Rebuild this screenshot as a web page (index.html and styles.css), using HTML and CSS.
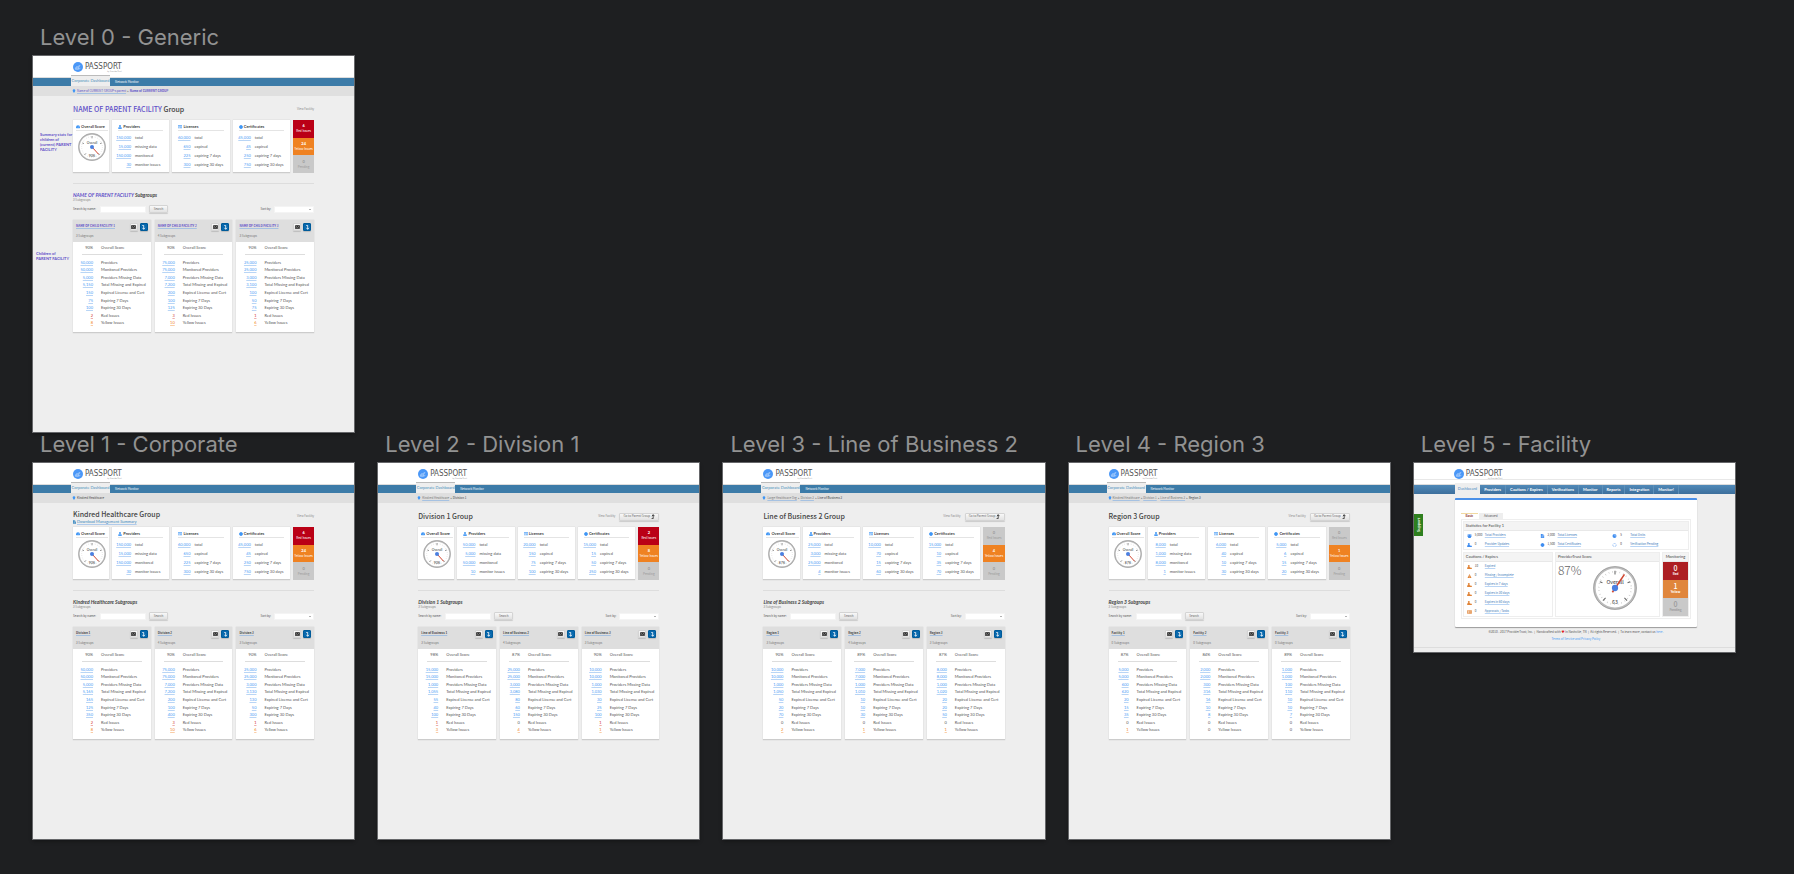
FILE: index.html
```html
<!DOCTYPE html>
<html lang="en">
	<head>
		<meta charset="UTF-8">
		<title>Passport Levels</title>
		<link rel="stylesheet" href="styles.css">
	</head>
	<body>
		<svg class="sprite" aria-hidden="true">
			<symbol id="i-logo" viewBox="0 0 30 30">
				<circle cx="15" cy="15" r="15" fill="#4a97f7"/>
				<path d="M7 20c1-4 3-6 6-6M11 21c1-5 3-8 6-9M15 21c2-4 3-8 6-12M6 21c6 2 11 1 16-2" fill="none" stroke="#fff" stroke-opacity=".7" stroke-width="2"/>
			</symbol>
			<symbol id="i-pin" viewBox="0 0 10 12">
				<path d="M5 12C3 9 1 7 1 4.500a4 4 0 0 1 8 0C9 7 7 9 5 12z"/>
			</symbol>
			<symbol id="i-meter" viewBox="0 0 12 10">
				<path d="M0 6a6 6 0 0 1 12 0l-1 3H1z"/>
				<path d="M6 7l3-4" stroke="#fff"/>
			</symbol>
			<symbol id="i-user" viewBox="0 0 12 12">
				<circle cx="6" cy="3.200" r="3"/>
				<path d="M1 12V9q0-3 3-3h4q3 0 3 3v3z"/>
				<path d="M5 7h2v3H5z" fill="#fff"/>
			</symbol>
			<symbol id="i-card" viewBox="0 0 12 10">
				<path d="M0 0h12v3H0z"/>
				<path d="M0 4h12v5H0z" fill-opacity=".6"/>
				<path d="M2 6h4M2 8h3" stroke="#fff"/>
			</symbol>
			<symbol id="i-seal" viewBox="0 0 12 12">
				<path d="M6 0l2 1 2 1 1 2 1 2-1 2-1 2-2 1-2 1-2-1-2-1-1-2-1-2 1-2 1-2 2-1z"/>
			</symbol>
			<symbol id="i-mail" viewBox="0 0 14 10">
				<path d="M0 0h14v10H0z"/>
				<path d="M0 1l7 5 7-5M0 9l4-4M14 9l-4-4" fill="none" stroke="#eee" stroke-width="1.200"/>
			</symbol>
			<symbol id="i-down" viewBox="0 0 10 14">
				<path d="M1 1h4.500v11M2 8l3.500 4L9 8" fill="none" stroke="currentColor" stroke-width="2.200"/>
			</symbol>
			<symbol id="i-up" viewBox="0 0 10 14">
				<path d="M1 13h4.500V2M2 6l3.500-4L9 6" fill="none" stroke="currentColor" stroke-width="2.200"/>
			</symbol>
			<symbol id="i-doc" viewBox="0 0 10 12">
				<path d="M0 0h6l4 4v8H0z"/>
				<path d="M2 6h6M2 9h6M6 0v4h4" fill="none" stroke="#fff"/>
			</symbol>
			<symbol id="i-users" viewBox="0 0 14 12">
				<circle cx="3" cy="3" r="2"/><circle cx="11" cy="3" r="2"/><circle cx="7" cy="4" r="3"/>
				<path d="M0 5h14l-2 4H2zM3 12V9q0-2 2-2h4q2 0 2 2v3z"/>
			</symbol>
			<symbol id="i-useradd" viewBox="0 0 14 12">
				<circle cx="5" cy="3" r="3"/>
				<path d="M0 12V9q0-3 3-3h4q3 0 3 3v3zM10 8h4v4h-4z"/>
			</symbol>
			<symbol id="i-warn" viewBox="0 0 14 12">
				<path d="M7 0l6 12H1z"/>
				<path d="M7 4v4M7 9v2" stroke="#fff"/>
			</symbol>
			<symbol id="i-list" viewBox="0 0 14 12">
				<path d="M0 1h14v10H0z"/>
				<path d="M1 4h12M1 7h12M4 2v8" stroke="#fff"/>
			</symbol>
			<symbol id="i-globe" viewBox="0 0 12 12">
				<circle cx="6" cy="6" r="6"/>
				<path d="M7 0v6h5" fill="none" stroke="#fff"/>
			</symbol>
			<symbol id="i-spin" viewBox="0 0 12 12">
				<circle cx="6" cy="6" r="5" fill="none" stroke="currentColor" stroke-width="2" stroke-dasharray="2 2"/>
			</symbol>
			<symbol id="i-dial" viewBox="0 0 84 84">
				<circle cx="42" cy="42" r="39" fill="#fff" stroke="#bbb" stroke-width="4"/>
				<circle cx="42" cy="42" r="41" fill="none" stroke="#777" stroke-width="1"/>
				<circle cx="42" cy="42" r="31" fill="none" stroke="#bbb" stroke-width="3" stroke-dasharray="1 6"/>
				<path d="M42 9v7M13 30l5 2M71 30l-5 2M19 66l5-5M65 66l-5-5" stroke="#666" stroke-width="2"/>
			</symbol>
		</svg>
		<main id="canvas"></main>
		<script src="main.js"></script>
	</body>
</html>
```
FILE: styles.css
```css
*{
	box-sizing: border-box;
}
body{
	margin: 0;
	min-height: 100vh;
	background-color: #1e1f21;
	font: 3px/5px "Noto Sans CJK SC", "Noto Sans", sans-serif;
	color: #555;
}
h1, h2, h3, p{
	margin: 0;
}
svg{
	display: block;
	flex: none;
	fill: currentColor;
}
a{
	color: #4a9cf5;
	text-decoration-color: rgba(80,150,230,.4);
}
.sprite{
	position: absolute;
	width: 0;
	height: 0;
}
#canvas{
	display: grid;
	grid-template-columns: repeat(5, 1fr);
	column-gap: 24px;
	padding: 25px 59px 35px 33px;
}
.level:first-child{
	grid-column: 1 / -1;
	width: calc((100% - 96px) / 5);
}
.level-name{
	padding: 0 0 6px 7px;
	font: 400 22px/25px Inter, sans-serif;
	color: #929292;
	white-space: nowrap;
}
.board{
	position: relative;
	background-color: #eee;
	outline: 1px solid #66676a;
	box-shadow: 0 2px 4px rgba(0,0,0,.4);
}
.group{
	min-height: 376px;
}

/* header */
.top{
	display: flex;
	align-items: center;
	gap: 2px;
	height: 22px;
	padding-left: 40px;
	border-bottom: 1px solid #ddd;
	background-color: #fff;
}
.logo{
	width: 10px;
	height: 10px;
}
.brand{
	padding-top: 1px;
	font: 8px/7px "DejaVu Sans Condensed", "DejaVu Sans", sans-serif;
	color: #555;
}
.brand small{
	display: block;
	font-size: 2px;
	line-height: 2px;
	text-align: right;
	color: #999;
}
.nav{
	display: flex;
	align-items: flex-end;
	height: 8px;
	padding-left: 38px;
	background-color: #3c7ba8;
}
.nav a{
	padding: 0 5px;
	font: 3px/8px "Noto Sans CJK SC", sans-serif;
	color: #fff;
	text-decoration: none;
	white-space: nowrap;
}
.group .nav .on{
	width: 39px;
	padding: 0;
	border-top: 1px solid #bbb;
	background-color: #eee;
	font: 4px/10px Lato, sans-serif;
	color: #4a90bb;
	text-align: center;
}
.crumbs{
	display: flex;
	align-items: center;
	gap: 1px;
	height: 10px;
	padding-left: 39px;
	background-color: #dfdfdf;
	white-space: nowrap;
}
.crumbs svg{
	width: 4px;
	height: 4px;
	color: #3f96f5;
}
.crumbs a{
	color: #777;
}
.crumbs span, .crumbs b{
	color: #444;
}

/* group page */
.page{
	margin: 0 40px;
	padding-top: 7px;
}
.title-row{
	display: flex;
	align-items: flex-start;
	min-height: 17px;
	white-space: nowrap;
}
.title-row h1{
	font-size: 7px;
	font-weight: 500;
	line-height: 12px;
	color: #444;
}
.title-row .short{
	line-height: 9px;
}
.title-row a{
	display: flex;
	align-items: center;
	gap: 1px;
	font: 4px/5px Lato, sans-serif;
	color: #3c8ac0;
}
.title-row a svg{
	width: 3px;
	height: 4px;
}
.actions{
	display: flex;
	align-items: center;
	gap: 4px;
	height: 13px;
	margin-left: auto;
	color: #888;
}
.purple, .purple a, a.purple, .crumbs .purple{
	color: #6150c8;
}
button{
	display: flex;
	align-items: center;
	justify-content: center;
	gap: 1px;
	height: 8px;
	padding: 0;
	border: 1px solid #d4d4d4;
	border-radius: 1px;
	background: linear-gradient(#f8f8f8, #e2e2e2);
	box-shadow: 0 1px 1px rgba(0,0,0,.15);
	font: 3px/5px "Noto Sans CJK SC", sans-serif;
	color: #666;
}
.parent{
	width: 40px;
}
.parent svg{
	width: 4px;
	height: 5px;
	color: #222;
}
.stats{
	display: grid;
	grid-template-columns: 36fr 57fr 57fr 57fr 21fr;
	gap: 3px;
	height: 53px;
}
.card{
	min-width: 0;
	padding: 3px 6px;
	border-bottom: 1px solid #ccc;
	background-color: #fff;
	box-shadow: 0 0 1px #bbb;
	font: 4px/8px Lato, sans-serif;
	white-space: nowrap;
}
.card.score{
	padding: 3px 1px 3px 3px;
}
.card h3{
	display: flex;
	align-items: center;
	gap: 1px;
	border-bottom: 1px solid #e4e4e4;
	font-size: 4px;
	line-height: 7px;
	color: #444;
}
.card h3 svg{
	width: 4px;
	height: 4px;
	color: #3f96f5;
}
.card .dial{
	width: 28px;
	height: 28px;
	margin: 2px auto 0;
}
table{
	border-collapse: collapse;
	font: 4px/4px Lato, sans-serif;
	white-space: nowrap;
}
td{
	padding: 0;
	text-align: right;
}
th{
	padding: 0 0 0 4px;
	font-weight: 400;
	text-align: left;
}
.card table{
	height: 36px;
	margin: 2px 0 0 -2px;
}
.card td{
	width: 14px;
}
.status{
	display: flex;
	flex-direction: column;
}
.status div{
	display: flex;
	flex: 1;
	flex-direction: column;
	align-items: center;
	justify-content: center;
	gap: 1px;
	background-color: #c9c9c9;
	color: #999;
	white-space: nowrap;
}
.status b{
	font: 700 4px/5px Lato, sans-serif;
}
.status .red{
	background-color: #ba0016;
	color: #fff;
}
.status .yellow{
	background-color: #ef8222;
	color: #fff;
}
.sub-head{
	margin-top: 10px;
	padding-top: 7px;
	border-top: 1px solid #ddd;
}
.sub-head h2{
	font: italic 700 5px/8px Lato, sans-serif;
	color: #444;
}
.sub-head p{
	line-height: 3px;
	color: #888;
}
.search{
	display: flex;
	align-items: center;
	gap: 3px;
	height: 8px;
	margin: 3px 0 7px;
	white-space: nowrap;
}
.search label:first-child{
	width: 24px;
}
.search input{
	width: 46px;
	height: 7px;
	padding: 0 1px;
	border: 1px solid #f4f4f4;
	background-color: #fff;
	font: inherit;
}
.search button{
	width: 19px;
}
.search .sort{
	margin-left: auto;
}
.select{
	position: relative;
	width: 40px;
	height: 7px;
}
.select select{
	display: block;
	width: 100%;
	height: 7px;
	padding: 0 1px;
	border: 1px solid #f4f4f4;
	background-color: #fff;
	font: inherit;
	appearance: none;
}
.select::after{
	content: "";
	position: absolute;
	top: 3px;
	right: 3px;
	border: 1px solid transparent;
	border-top-color: #666;
}
.subs{
	display: flex;
	gap: 4px;
}
.sub{
	flex: 1 1 0;
	padding-bottom: 5px;
	border-bottom: 1px solid #ccc;
	background-color: #fff;
	box-shadow: 0 0 1px #bbb;
}
.sub header{
	display: flex;
	gap: 2px;
	height: 22px;
	padding: 3px;
	background-color: #dedede;
}
.sub header div{
	flex: 1;
	white-space: nowrap;
	color: #777;
}
.sub h3{
	height: 11px;
	font-size: 3px;
	line-height: 6px;
}
.sub h3 a{
	color: #444;
}
.sub h3 .purple{
	color: #6150c8;
}
.sub button{
	width: 8px;
	color: #222;
}
.sub button svg{
	width: 5px;
	height: 4px;
}
.sub .open{
	border-color: #005b9a;
	background: #0868ad;
	color: #fff;
}
.sub .open svg{
	height: 5px;
}
.overall{
	display: flex;
	gap: 8px;
	margin: 0 9px 4px;
	border-bottom: 1px solid #ddd;
	font: 4px/12px Lato, sans-serif;
	white-space: nowrap;
}
.overall span:first-child{
	width: 11px;
	text-align: right;
}
.sub table{
	height: 68px;
}
.sub td{
	width: 20px;
}
.sub th{
	padding-left: 8px;
}
td .red{
	color: #d0342c;
	text-decoration-color: rgba(208,52,44,.4);
}
td .yellow{
	color: #ef8222;
	text-decoration-color: rgba(239,130,34,.4);
}
.note{
	position: absolute;
	left: 7px;
	top: 76px;
	font: 700 4px/5px Lato, sans-serif;
	white-space: nowrap;
}
.note.kids{
	left: 3px;
	top: 195px;
}

/* facility */
.facility .top{
	box-shadow: inset 0 -4px #fff, inset 0 -5px #e8e8e8;
}
.facility .nav{
	height: 9px;
	padding-left: 41px;
	background: linear-gradient(#5089b8, #3d6f9c);
}
.facility .nav a{
	padding: 0 4px;
	border-right: 1px solid #5d8fb8;
	font: 700 4px/9px Lato, sans-serif;
}
.facility .nav .on{
	padding: 0 3px;
	border: 0;
	background-color: #eee;
	color: #7aa7cf;
	line-height: 11px;
}
.support{
	position: absolute;
	left: 0;
	top: 51px;
	width: 9px;
	height: 22px;
	background-color: #2e7f1f;
	font: 700 4px/9px Lato, sans-serif;
	color: #fff;
	text-align: center;
	text-decoration: none;
	writing-mode: vertical-rl;
	transform: rotate(180deg);
}
.sheet{
	margin: 4px 38px 0 41px;
	padding: 13px 6px 8px;
	border-top: 2px solid #4a90e8;
	border-radius: 1px;
	background-color: #fff;
	box-shadow: 0 1px 1px #999;
}
.tabs{
	display: flex;
	gap: 1px;
}
.tabs a{
	width: 24px;
	background-color: #eee;
	color: #555;
	line-height: 6px;
	text-align: center;
	text-decoration: none;
}
.tabs .on{
	width: 17px;
	border-top: 1px solid #f1d9a0;
	background-color: #fff;
	color: #8a2b2b;
	font-weight: 700;
	line-height: 5px;
}
.panels{
	display: grid;
	grid-template-columns: 90fr 105fr 27fr;
	gap: 2px;
	padding: 1px;
	border: 1px solid #eee;
	white-space: nowrap;
}
.panel{
	border: 1px solid #eee;
}
.panel h3{
	padding-left: 2px;
	background-color: #f4f4f4;
	border-bottom: 1px solid #e8e8e8;
	font: 4px/8px Lato, sans-serif;
	color: #444;
}
.panel.wide{
	grid-column: 1 / -1;
}
.items{
	display: grid;
	padding: 0 3px;
}
.wide .items{
	grid-template-columns: repeat(3, 1fr);
}
.item{
	display: flex;
	align-items: center;
	gap: 2px;
	line-height: 9px;
	color: #444;
}
.item svg{
	width: 5px;
	height: 4px;
	color: #3f8df0;
}
.item span{
	min-width: 9px;
	padding-left: 1px;
}
.item a{
	color: #3d78b8;
}
.cautions .item svg{
	color: #e08438;
}
.trust{
	display: flex;
	padding: 0 2px;
}
.trust strong{
	width: 35px;
	font: 300 12px/16px "Noto Sans CJK SC", sans-serif;
	color: #666;
}
.trust svg{
	width: 44px;
	height: 44px;
	margin-top: 4px;
}
.monitoring h3{
	padding: 0;
	text-align: center;
}
.monitoring .status{
	height: 54px;
}
.monitoring .status div{
	gap: 0;
	font-weight: 700;
}
.monitoring .status b{
	font: 500 7px/7px "Noto Sans CJK SC", sans-serif;
}
.monitoring .status .red{
	background-color: #ad1f23;
}
.monitoring .status .yellow{
	background-color: #e0863c;
}
.foot{
	padding: 2px 0 4px 3px;
	border-bottom: 1px solid #ddd;
	line-height: 7px;
	text-align: center;
	white-space: nowrap;
}
.end{
	height: 4px;
}
.foot a{
	text-decoration: none;
}
.foot b{
	color: #e02020;
}
```
FILE: main.js
```js
var rowNames = ["Providers","Monitored Providers","Providers Missing Data","Total Missing and Expired","Expired License and Cert","Expiring 7 Days","Expiring 30 Days","Red Issues","Yellow Issues"];
var cards = [
	{name:"Providers", icon:"user", rows:["total","missing data","monitored","monitor issues"]},
	{name:"Licenses", icon:"card", rows:["total","expired","expiring 7 days","expiring 30 days"]},
	{name:"Certificates", icon:"seal", rows:["total","expired","expiring 7 days","expiring 30 days"]}
];

var levels = [
	{
		label:"Level 0 - Generic", title:"NAME OF PARENT FACILITY", suffix:"Group", generic:true,
		crumbs:["Name of CURRENT GROUP's parent","Name of CURRENT GROUP"], score:"90%", status:[6,24,0],
		stats:[["150,000","15,000","150,000","30"],["60,000","650","225","300"],["45,000","45","250","750"]],
		subs:[
			["NAME OF CHILD FACILITY 1",3,"90%",["50,000","50,000","5,000","5,150","150","75","100","2","8"]],
			["NAME OF CHILD FACILITY 2",4,"90%",["75,000","75,000","7,000","7,200","200","100","125","3","10"]],
			["NAME OF CHILD FACILITY 3",3,"90%",["25,000","25,000","3,000","3,100","100","50","75","1","6"]]
		]
	},
	{
		label:"Level 1 - Corporate", title:"Kindred Healthcare", suffix:"Group", summary:true,
		crumbs:["Kindred Healthcare"], score:"90%", status:[6,24,0],
		stats:[["150,000","15,000","150,000","30"],["60,000","650","225","300"],["45,000","45","250","750"]],
		subs:[
			["Division 1",3,"90%",["50,000","50,000","5,000","5,165","165","125","350","2","8"]],
			["Division 2",4,"90%",["75,000","75,000","7,000","7,200","200","100","400","3","10"]],
			["Division 3",3,"90%",["25,000","25,000","3,000","3,130","130","50","300","1","6"]]
		]
	},
	{
		label:"Level 2 - Division 1", title:"Division 1", suffix:"Group", parent:true,
		crumbs:["Kindred Healthcare","Division 1"], score:"90%", status:[2,8,0],
		stats:[["50,000","5,000","50,000","10"],["20,000","150","75","100"],["15,000","15","50","250"]],
		subs:[
			["Line of Business 1",3,"98%",["15,000","15,000","1,000","1,055","55","40","100","1","3"]],
			["Line of Business 2",4,"87%",["25,000","25,000","3,000","3,080","80","60","150","0","4"]],
			["Line of Business 3",3,"90%",["10,000","10,000","1,000","1,030","30","25","100","1","1"]]
		]
	},
	{
		label:"Level 3 - Line of Business 2", title:"Line of Business 2", suffix:"Group", parent:true,
		crumbs:["Large Healthcare Org","Division 2","Line of Business 2"], score:"87%", status:[0,4,0],
		stats:[["25,000","3,000","25,000","4"],["10,000","70","15","60"],["15,000","10","35","70"]],
		subs:[
			["Region 1",3,"90%",["10,000","10,000","1,000","1,050","50","20","70","0","2"]],
			["Region 2",4,"89%",["7,000","7,000","1,000","1,010","10","10","30","0","1"]],
			["Region 3",3,"87%",["8,000","8,000","1,000","1,020","20","20","50","0","1"]]
		]
	},
	{
		label:"Level 4 - Region 3", title:"Region 3", suffix:"Group", parent:true,
		crumbs:["Kindred Healthcare","Division 1","Line of Business 2","Region 3"], score:"87%", status:[0,1,0],
		stats:[["8,000","1,000","8,000","1"],["6,000","40","10","30"],["5,000","6","15","20"]],
		subs:[
			["Facility 1",0,"87%",["5,000","5,000","600","620","20","15","35","0","1"]],
			["Facility 2",0,"84%",["2,000","2,000","300","316","16","10","8","0","0"]],
			["Facility 3",0,"89%",["1,000","1,000","100","110","10","10","7","0","0"]]
		]
	}
];

function icon(name){
	return '<svg aria-hidden="true"><use href="#i-' + name + '"/></svg>';
}

function brandBar(){
	return '<div class="top"><svg class="logo"><use href="#i-logo"/></svg>' +
		'<div class="brand">PASSPORT<small>by ProviderTrust</small></div></div>';
}

// needle is the path of the red hand in the 84x84 dial
function dial(value, needle){
	return '<svg class="dial" viewBox="0 0 84 84"><use href="#i-dial"/>' +
		'<text x="42" y="34" font-size="10" text-anchor="middle" fill="#333">Overall</text>' +
		'<path d="' + needle + '" stroke="#d0452f" stroke-width="3"/>' +
		'<circle cx="42" cy="42" r="6" fill="#4a7fe0"/>' +
		'<text x="42" y="72" font-size="10" text-anchor="middle" fill="#333">' + value + '</text></svg>';
}

function crumbs(l){
	return l.crumbs.map(function(c, i){
		var last = i == l.crumbs.length - 1;
		var cls = l.generic ? ' class="purple"' : '';
		if(last){
			return l.generic ? '<b' + cls + '>' + c + '</b>' : '<span>' + c + '</span>';
		}
		return '<a href="#"' + cls + '>' + c + '</a> <b>»</b>';
	}).join(" ");
}

function statusBox(s, names){
	var colors = ["red","yellow","pending"];
	return '<div class="status">' + s.map(function(n, i){
		return '<div class="' + (n || names[0] == "Red" ? colors[i] : "none") + '"><b>' + n + '</b>' + names[i] + '</div>';
	}).join("") + '</div>';
}

function sub(l, s){
	var rows = s[3].map(function(v, i){
		var cls = i == 7 ? "red" : i == 8 ? "yellow" : "";
		var cell = v == "0" ? v : '<a href="#" class="' + cls + '">' + v + '</a>';
		return '<tr><td>' + cell + '</td><th scope="row">' + rowNames[i] + '</th></tr>';
	}).join("");
	return '<section class="sub"><header><div><h3><a href="#"' + (l.generic ? ' class="purple"' : '') + '>' + s[0] + '</a></h3>' +
		s[1] + ' Subgroups</div><button aria-label="Email">' + icon("mail") + '</button>' +
		'<button class="open" aria-label="Open">' + icon("down") + '</button></header>' +
		'<div class="overall"><span>' + s[2] + '</span><span>Overall Score</span></div><table>' + rows + '</table></section>';
}

function board(l, n){
	var name = l.generic ? '<span class="purple">' + l.title + '</span>' : l.title;
	var html = '<div class="board group">' + brandBar() +
		'<nav class="nav"><a href="#" class="on">Corporate Dashboard</a><a href="#">Network Monitor</a></nav>' +
		'<div class="crumbs">' + icon("pin") + crumbs(l) + '</div><div class="page"><div class="title-row"><div>' +
		'<h1' + (l.summary ? ' class="short"' : '') + '>' + name + ' ' + l.suffix + '</h1>' +
		(l.summary ? '<a href="#">' + icon("doc") + 'Download Management Summary</a>' : '') +
		'</div><div class="actions">View Facility' +
		(l.parent ? '<button class="parent">Go to Parent Group ' + icon("up") + '</button>' : '') + '</div></div>';

	html += '<div class="stats"><div class="card score"><h3>' + icon("meter") + 'Overall Score</h3>' + dial(l.score, "M42 42L62 64") + '</div>';
	cards.forEach(function(c, i){
		html += '<div class="card"><h3>' + icon(c.icon) + c.name + '</h3><table>' + c.rows.map(function(r, j){
			return '<tr><td><a href="#">' + l.stats[i][j] + '</a></td><th scope="row">' + r + '</th></tr>';
		}).join("") + '</table></div>';
	});
	html += statusBox(l.status, ["Red Issues","Yellow Issues","Pending"]) + '</div>';

	html += '<div class="sub-head"><h2>' + name + ' Subgroups</h2><p>3 Subgroups</p></div>' +
		'<div class="search"><label for="q' + n + '">Search by name:</label><input id="q' + n + '" type="text">' +
		'<button>Search</button><label class="sort" for="s' + n + '">Sort by:</label>' +
		'<span class="select"><select id="s' + n + '"><option></option></select></span></div>' +
		'<div class="subs">' + l.subs.map(function(s){ return sub(l, s); }).join("") + '</div></div>';
	if(l.generic){
		html += '<p class="note purple">Summary stats for<br>children of<br>(current) PARENT<br>FACILITY</p>' +
			'<p class="note kids purple">Children of<br>PARENT FACILITY</p>';
	}
	return html + '</div>';
}

function items(list){
	return list.map(function(r){
		return '<div class="item">' + icon(r[0]) + '<span>' + r[1] + '</span><a href="#">' + r[2] + '</a></div>';
	}).join("");
}

function facility(){
	var nav = ["Dashboard","Providers","Cautions / Expires","Verifications","Monitor","Reports","Integration","Monitor!"];
	return '<div class="board facility">' + brandBar() + '<nav class="nav">' + nav.map(function(n, i){
		return '<a href="#"' + (i ? '' : ' class="on"') + '>' + n + '</a>';
	}).join("") + '</nav><a href="#" class="support">Support</a><div class="sheet">' +
		'<div class="tabs"><a href="#" class="on">Basic</a><a href="#">Advanced</a></div><div class="panels">' +
		'<section class="panel wide"><h3>Statistics for Facility 1</h3><div class="items">' + items([
			["users","5,000","Total Providers"],["doc","2,000","Total Licenses"],["globe","5","Total Units"],
			["useradd","0","Provider Updates"],["seal","1,500","Total Certificates"],["spin","0","Verification Pending"]
		]) + '</div></section>' +
		'<section class="panel cautions"><h3>Cautions / Expires</h3><div class="items">' + items([
			["useradd","10","Expired"],["warn","0","Missing / Incomplete"],["useradd","0","Expires in 7 days"],
			["useradd","0","Expires in 30 days"],["useradd","0","Expires in 60 days"],["list","0","Approvals / Tasks"]
		]) + '</div></section>' +
		'<section class="panel"><h3>ProviderTrust Score</h3><div class="trust"><strong>87%</strong>' + dial("63", "M37 50L60 16") + '</div></section>' +
		'<section class="panel monitoring"><h3>Monitoring</h3>' + statusBox([0,1,0], ["Red","Yellow","Pending"]) + '</section>' +
		'</div></div><div class="foot">©2010 - 2017 ProviderTrust, Inc. &nbsp;|&nbsp; Handcrafted with <b>♥</b> in Nashville, TN &nbsp;|&nbsp; All rights Reserved. &nbsp;|&nbsp; To learn more, contact us <a href="#">here.</a><br>' +
		'<a href="#">Terms of Service and Privacy Policy</a></div><div class="end"></div></div>';
}

var html = "";
levels.forEach(function(l, n){
	html += '<section class="level"><div class="level-name">' + l.label + '</div>' + board(l, n) + '</section>';
});
html += '<section class="level"><div class="level-name">Level 5 - Facility</div>' + facility() + '</section>';
document.getElementById("canvas").innerHTML = html;
```
